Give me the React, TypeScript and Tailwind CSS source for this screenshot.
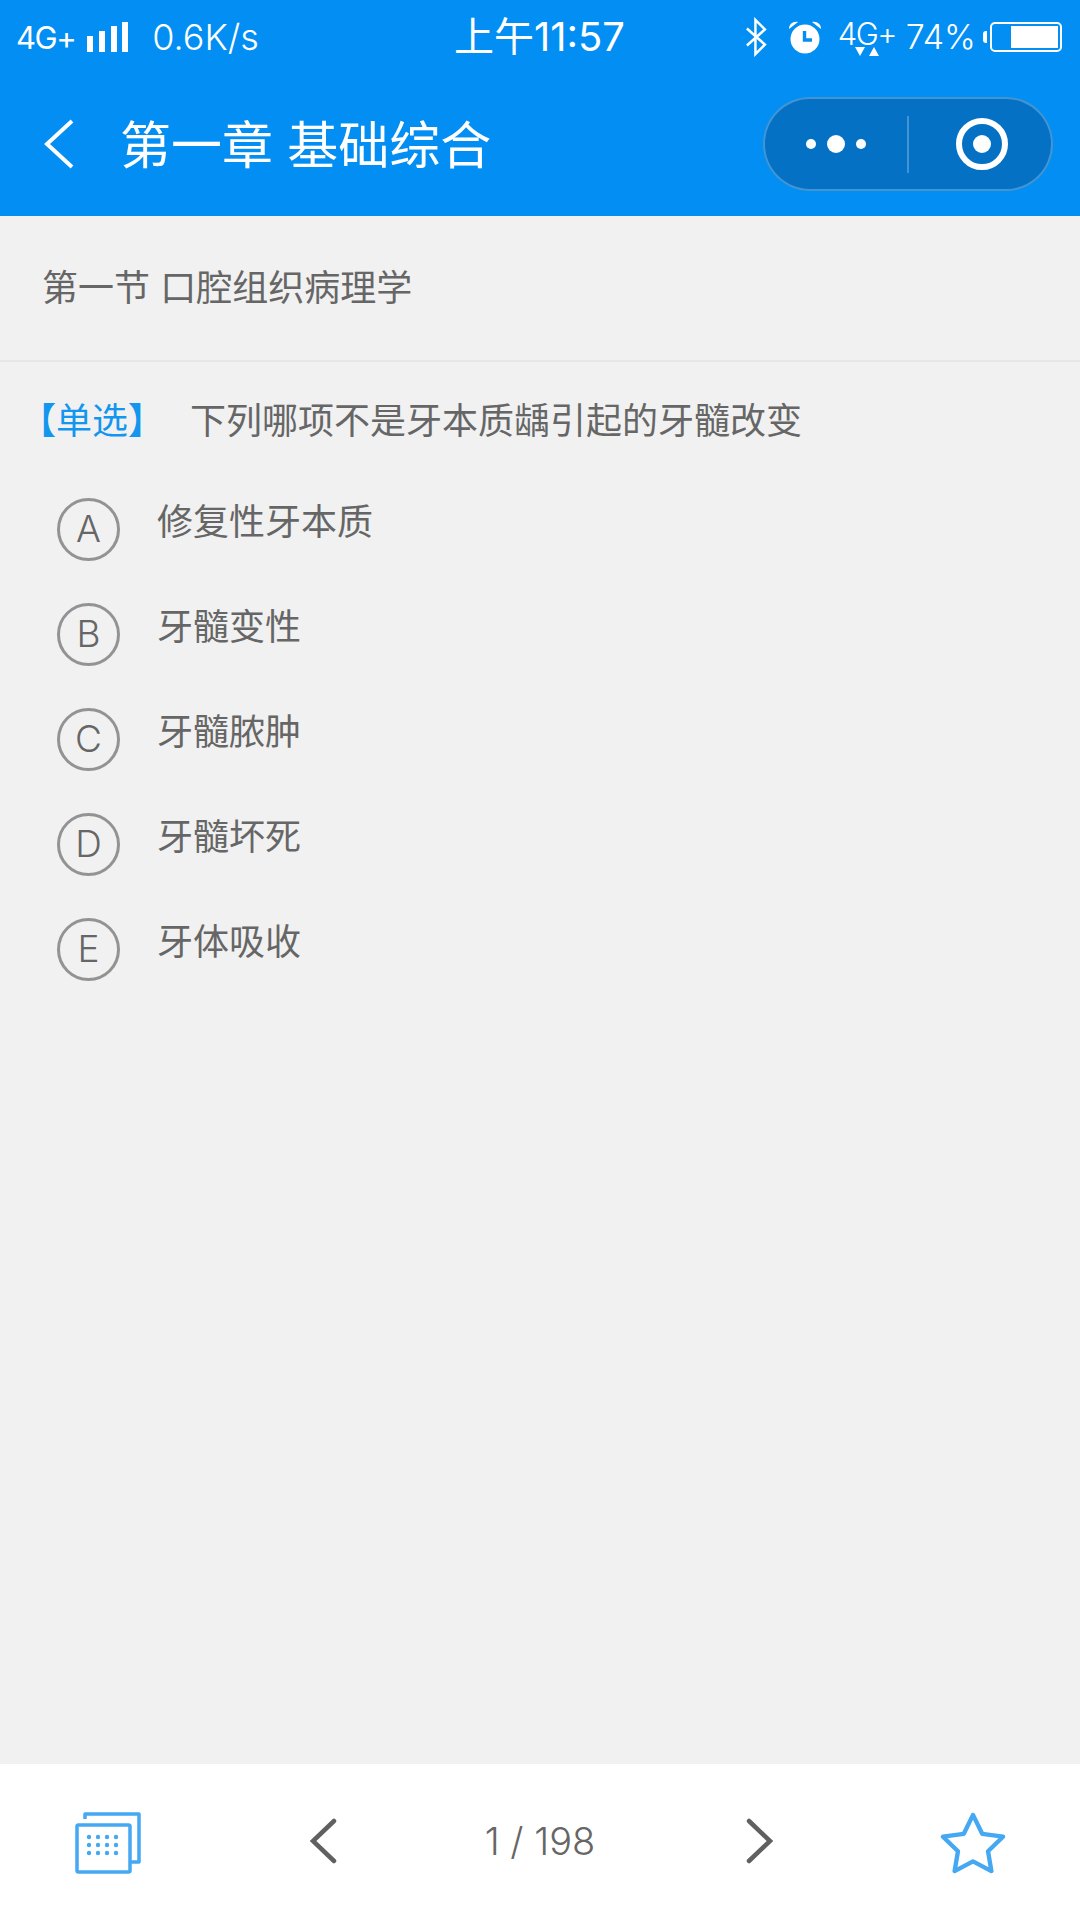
const cjk = "font-['Inter','Noto_Sans_CJK_SC',sans-serif]"

const options = [
  { key: 'A', text: '修复性牙本质' },
  { key: 'B', text: '牙髓变性' },
  { key: 'C', text: '牙髓脓肿' },
  { key: 'D', text: '牙髓坏死' },
  { key: 'E', text: '牙体吸收' },
]

function SignalBars() {
  return (
    <svg width="42" height="30" viewBox="0 0 42 30" className="ml-[12px]" fill="#fff">
      <rect x="0" y="14" width="6" height="16" />
      <rect x="12" y="9" width="6" height="21" />
      <rect x="24" y="4" width="6" height="26" />
      <rect x="35" y="0" width="6" height="30" />
    </svg>
  )
}

function Bluetooth() {
  return (
    <svg width="24" height="40" viewBox="0 0 24 40" fill="none" stroke="#fff" strokeWidth="2.6">
      <path d="M2 11 L21 28 L11 38 V2 L21 12 L2 29" />
    </svg>
  )
}

function Alarm() {
  return (
    <svg width="36" height="34" viewBox="0 0 36 34">
      <circle cx="18" cy="19" r="14.5" fill="#fff" />
      <path d="M2 9 C2 4 6 1 11 2 Z" fill="#fff" />
      <path d="M34 9 C34 4 30 1 25 2 Z" fill="#fff" />
      <path d="M17.5 11 V20 H25" fill="none" stroke="#028ef2" strokeWidth="3.4" />
    </svg>
  )
}

function Battery() {
  return (
    <div className="flex items-center ml-[7px]">
      <div className="w-[4px] h-[12px] bg-white rounded-l-[3px] mr-[3px]" />
      <div className="w-[72px] h-[30px] border-2 border-white rounded-[5px] flex justify-end p-[2px]">
        <div className="w-[47px] h-full bg-white" />
      </div>
    </div>
  )
}

function StatusBar() {
  return (
    <div className="h-[72px] pt-[2px] flex items-center justify-between pl-[16px] pr-[18px] text-white font-['Inter',sans-serif]">
      <div className="flex items-center w-[318px]">
        <span className="text-[31px] leading-none tracking-[-1.5px]">4G+</span>
        <SignalBars />
        <span className="text-[36px] leading-none ml-[23px] font-light">0.6K/s</span>
      </div>
      <span className={`text-[40px] leading-none ${cjk}`}>上午11:57</span>
      <div className="flex items-center w-[317px] justify-end">
        <Bluetooth />
        <div className="ml-[19px]"><Alarm /></div>
        <div className="relative ml-[15px] w-[60px] h-[40px]">
          <span className="absolute left-0 top-[-1px] text-[31px] leading-[36px] tracking-[-1.5px] font-light">4G+</span>
          <svg width="26" height="12" viewBox="0 0 26 12" className="absolute left-[17px] top-[30px]" fill="#fff">
            <path d="M0 0 H10 L5 9 Z" />
            <path d="M14 9 H24 L19 0 Z" />
          </svg>
        </div>
        <span className="text-[34px] leading-none ml-[11px] font-light">74%</span>
        <Battery />
      </div>
    </div>
  )
}

function NavBar() {
  return (
    <div className="h-[144px] flex items-center pl-[44px] pr-[27px] text-white">
      <svg width="30" height="50" viewBox="0 0 30 50" fill="none" stroke="#fff" strokeWidth="4">
        <path d="M28 2 L3 25 L28 48" />
      </svg>
      <span className={`ml-[46px] pt-[3px] text-[51px] leading-none ${cjk}`}>第一章 基础综合</span>
      <div className="ml-auto w-[290px] h-[94px] rounded-full bg-[#0471c4] border-2 border-white/25 flex items-center">
        <div className="w-[142px] flex items-center justify-center gap-[11px]">
          <div className="w-[10px] h-[10px] rounded-full bg-white" />
          <div className="w-[18px] h-[18px] rounded-full bg-white" />
          <div className="w-[10px] h-[10px] rounded-full bg-white" />
        </div>
        <div className="w-[2px] h-[57px] bg-white/25" />
        <div className="flex-1 flex items-center justify-center pl-[4px]">
          <div className="w-[52px] h-[52px] rounded-full border-[6px] border-white flex items-center justify-center">
            <div className="w-[18px] h-[18px] rounded-full bg-white" />
          </div>
        </div>
      </div>
    </div>
  )
}

function Question() {
  return (
    <div className="flex-1 bg-[#f1f1f1] text-[#666666]">
      <div className="h-[146px] border-b-2 border-[#e6e6e6] pl-[42px] flex items-center">
        <span className={`text-[36px] leading-none ${cjk}`}>第一节 口腔组织病理学</span>
      </div>
      <div className="pt-[35px] pl-[20px] flex items-center">
        <span className={`w-[170px] text-[36px] leading-[48px] text-[#1296ee] ${cjk}`}>
          <span className="font-bold">【</span>单选<span className="font-bold">】</span>
        </span>
        <span className={`text-[36px] leading-[48px] ${cjk}`}>下列哪项不是牙本质龋引起的牙髓改变</span>
      </div>
      <div className="mt-[53px] pl-[57px]">
        {options.map(o => (
          <div key={o.key} className="h-[105px] flex items-start">
            <div className="w-[63px] h-[63px] pb-[2px] rounded-full border-[3px] border-[#939393] flex items-center justify-center font-['Inter',sans-serif] font-light text-[37px] leading-none">
              {o.key}
            </div>
            <span className={`ml-[37px] text-[36px] leading-[48px] ${cjk}`}>{o.text}</span>
          </div>
        ))}
      </div>
    </div>
  )
}

function BottomBar() {
  return (
    <div className="h-[156px] bg-white grid grid-cols-5 items-center justify-items-center pb-[3px]">
      <svg width="66" height="62" viewBox="0 0 66 62" fill="none" stroke="#44a8f2" className="translate-y-[2px]">
        <path d="M10 7 V2 H64 V50 H56" strokeWidth="3.5" strokeLinejoin="round" />
        <rect x="2" y="13" width="53" height="47" strokeWidth="3.5" rx="1.5" />
        {[25, 33, 41].map(y =>
          [14, 23, 32, 41].map(x => (
            <circle key={`${x}-${y}`} cx={x} cy={y} r="2.2" fill="#44a8f2" stroke="none" />
          )),
        )}
      </svg>
      <svg width="28" height="46" viewBox="0 0 28 46" fill="none" stroke="#606060" strokeWidth="4.5" strokeLinecap="round" className="-translate-x-[1px]">
        <path d="M25 3 L4 23 L25 43" />
      </svg>
      <span className="text-[38px] leading-none text-[#666666] font-light font-['Inter',sans-serif]">1 / 198</span>
      <svg width="28" height="46" viewBox="0 0 28 46" fill="none" stroke="#606060" strokeWidth="4.5" strokeLinecap="round" className="translate-x-[4px]">
        <path d="M3 3 L24 23 L3 43" />
      </svg>
      <svg width="66" height="62" viewBox="0 0 68 64" fill="none" stroke="#44a8f2" strokeWidth="4.5" strokeLinejoin="round" className="translate-x-[1px] translate-y-[2px]">
        <path d="M34 3 L43.5 22.5 L65 25.5 L49.5 40.5 L53 61 L34 51 L15 61 L18.5 40.5 L3 25.5 L24.5 22.5 Z" />
      </svg>
    </div>
  )
}

export default function App() {
  return (
    <div className="w-[1080px] h-[1920px] flex flex-col overflow-hidden">
      <div className="bg-[#028ef2]">
        <StatusBar />
        <NavBar />
      </div>
      <Question />
      <BottomBar />
    </div>
  )
}
